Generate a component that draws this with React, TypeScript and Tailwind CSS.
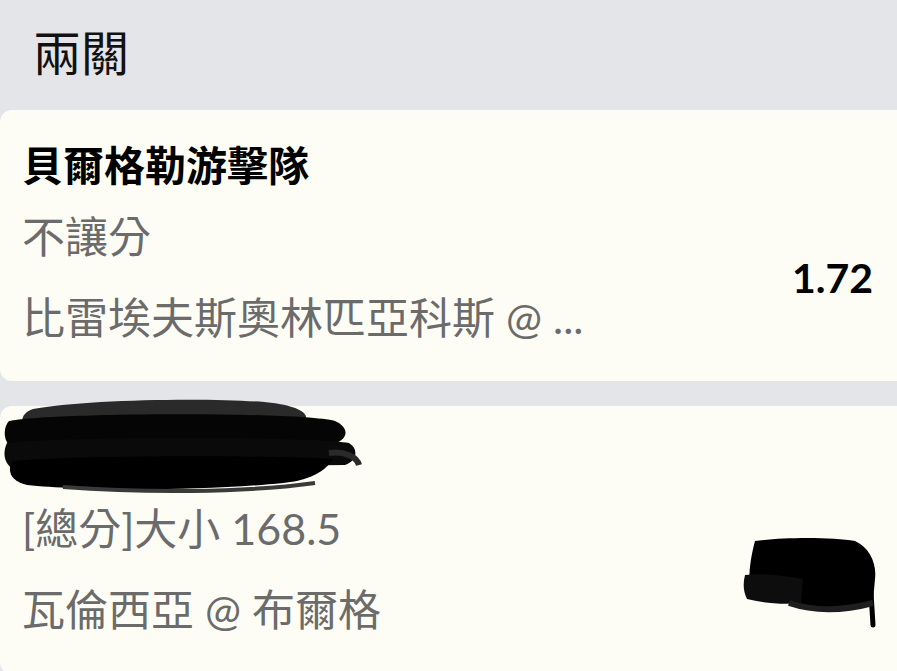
import type { ReactNode } from 'react'

const sans = "font-['Lato','Noto_Sans_CJK_TC',sans-serif]"

function TitleScribble() {
  return (
    <svg width="360" height="100" viewBox="0 0 360 100" className="absolute left-[3px] top-[-11px]">
      <path d="M30 14 C80 4 220 2 270 8 C300 12 312 22 296 30 L24 34 C16 28 18 18 30 14 Z" fill="#2a2a2a" />
      <path d="M6 26 C40 18 290 16 332 26 C346 32 346 44 332 48 L8 52 C0 46 0 32 6 26 Z" fill="#050505" />
      <path d="M4 48 C40 42 300 40 346 48 C356 54 354 66 342 70 L10 74 C0 68 0 56 4 48 Z" fill="#0a0a0a" />
      <path d="M10 66 C60 60 270 60 330 64 C320 80 300 86 280 88 C200 96 80 96 24 90 C6 86 4 74 10 66 Z" fill="#000" />
      <path d="M60 92 C140 98 240 98 312 88" stroke="#3a3a3a" strokeWidth="4" fill="none" />
      <path d="M326 58 C342 56 354 62 356 70" stroke="#2a2a2a" strokeWidth="6" fill="none" />
    </svg>
  )
}

function OddsScribble() {
  return (
    <svg width="136" height="94" viewBox="0 0 136 94" className="translate-y-[14px] translate-x-[6px]">
      <path d="M12 4 C40 0 90 0 112 4 C126 10 134 26 132 42 L130 64 C110 70 80 72 60 68 C40 64 20 62 10 60 C4 50 6 26 12 4 Z" fill="#000" />
      <path d="M2 38 C20 36 40 38 60 42 L58 66 C40 68 20 66 4 62 C0 54 0 46 2 38 Z" fill="#0d0d0d" />
      <path d="M128 56 L130 88" stroke="#000" strokeWidth="5" strokeLinecap="round" />
      <path d="M46 66 C70 74 100 74 130 66" stroke="#1e1e1e" strokeWidth="6" fill="none" />
    </svg>
  )
}

function BetCard({ title, lines, right, className }: { title: ReactNode; lines: string[]; right: ReactNode; className: string }) {
  return (
    <div className={`relative w-[909px] rounded-[12px] bg-[#fdfdf6] pl-[22px] pr-[36px] ${className}`}>
      {title}
      <div className="mt-[23px] flex items-center justify-between">
        <div className="flex flex-col gap-[33px] text-[43px] leading-[48px] text-[#6b6b6b]">
          {lines.map((l) => (
            <div key={l}>{l}</div>
          ))}
        </div>
        {right}
      </div>
    </div>
  )
}

export default function App() {
  return (
    <div className={`w-[897px] h-[671px] overflow-hidden bg-[#e4e5e8] ${sans}`}>
      <div className="h-[110px] pl-[33px] pt-[25px]">
        <h1 className="text-[48px] leading-[56px] font-normal text-[#111]">兩關</h1>
      </div>

      <div className="flex flex-col gap-[25px]">
        <BetCard
          className="pt-[32px] pb-[39px]"
          title={<div className="text-[41px] leading-[48px] font-bold text-black">貝爾格勒游擊隊</div>}
          lines={['不讓分', '比雷埃夫斯奧林匹亞科斯 @ ...']}
          right={<div className="text-[41px] leading-[48px] font-bold text-black">1.72</div>}
        />
        <BetCard
          className="pt-[28px] pb-[40px]"
          title={
            <div className="h-[48px]">
              <TitleScribble />
            </div>
          }
          lines={['[總分]大小 168.5', '瓦倫西亞 @ 布爾格']}
          right={<OddsScribble />}
        />
      </div>
    </div>
  )
}
